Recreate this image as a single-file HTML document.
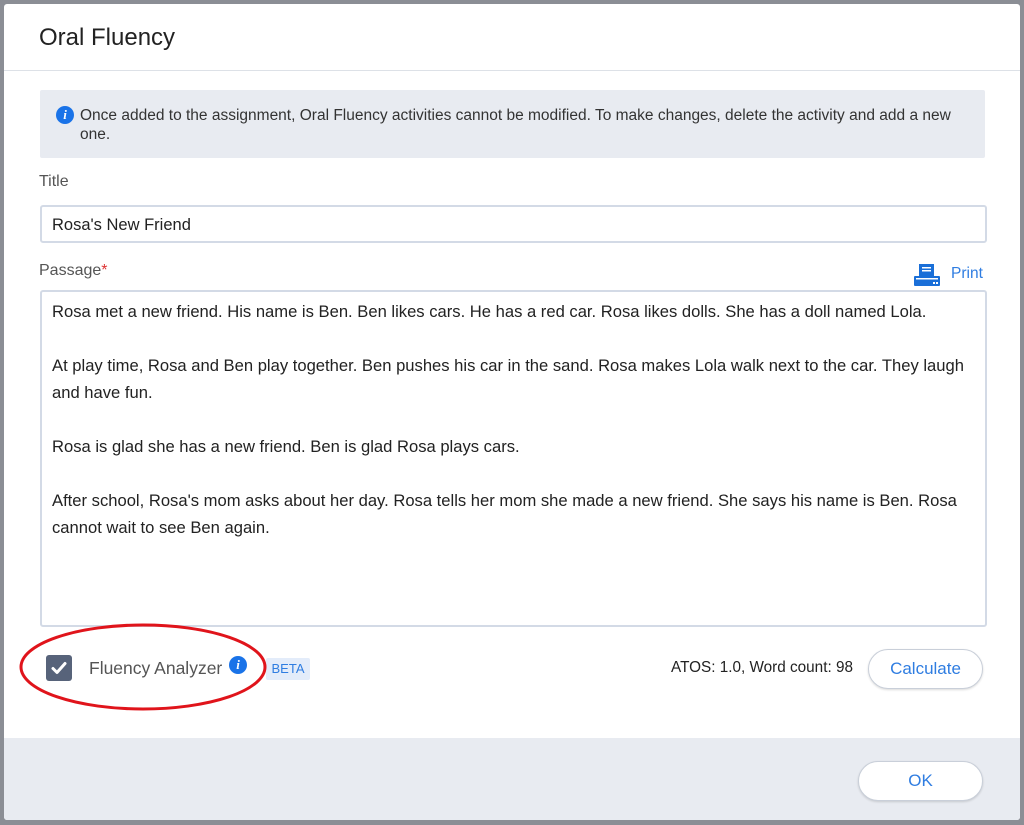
<!DOCTYPE html>
<html><head><style>
body{margin:0;width:1024px;height:825px;background:#8b8e95;position:relative;overflow:hidden;font-family:"Liberation Sans",sans-serif;}
.modal{position:absolute;left:4px;top:4px;width:1016px;height:816px;background:#fff;border-radius:3px;overflow:hidden;}
.hdr{position:absolute;left:0;top:0;width:100%;height:66px;border-bottom:1px solid #dde1e7;}
.hdr h1{position:absolute;left:35px;top:20px;margin:0;font-weight:normal;font-size:24px;color:#222;}
.info{position:absolute;left:36px;top:86px;width:945px;height:68px;background:#e8ebf1;border-radius:2px;font-size:15.5px;color:#333;line-height:19px;}
.info .t{position:absolute;left:40px;top:16px;width:900px;white-space:nowrap;}
.ic{position:absolute;width:18px;height:18px;border-radius:50%;background:#1a73e8;color:#fff;font:italic bold 13px "Liberation Serif",serif;text-align:center;line-height:18px;}
.lbl{position:absolute;left:35px;font-size:16px;color:#555;}
.inp{position:absolute;left:36px;width:943px;border:2px solid #d3dae6;border-radius:3px;background:#fff;}
.pass{font-size:16.6px;color:#222;line-height:27px;padding:6px 10px;}
.pass p{margin:0 0 27px 0;}
.cb{position:absolute;left:42px;top:651px;width:26px;height:26px;background:#57637a;border-radius:3px;}
.btn{position:absolute;border:1px solid #c9cfd9;border-radius:20px;background:#fff;color:#2f7de1;font-size:17px;text-align:center;box-shadow:0 1px 2px rgba(0,0,0,.15);}
.foot{position:absolute;left:0;top:734px;width:100%;height:82px;background:#e8ebf1;}
</style></head><body>
<div class="modal">
 <div class="hdr"><h1>Oral Fluency</h1></div>
 <div class="info"><div class="ic" style="left:16px;top:16px">i</div><div class="t">Once added to the assignment, Oral Fluency activities cannot be modified. To make changes, delete the activity and add a new<br>one.</div></div>
 <div class="lbl" style="top:169px">Title</div>
 <div class="inp" style="top:201px;height:34px;"><div style="padding:9px 10px;font-size:16.5px;color:#222">Rosa's New Friend</div></div>
 <div class="lbl" style="top:258px">Passage<span style="color:#d33">*</span></div>
 <svg style="position:absolute;left:910px;top:260px" width="26" height="22" viewBox="0 0 26 22"><rect x="5" y="0" width="15" height="12" fill="#1a6fd8"/><rect x="8" y="3" width="9" height="1.5" fill="#fff"/><rect x="8" y="6" width="9" height="1.5" fill="#fff"/><rect x="0" y="12" width="26" height="10" rx="1" fill="#1a6fd8"/><rect x="2" y="14" width="22" height="1.5" fill="#fff"/><rect x="19" y="18" width="2" height="2" fill="#fff"/><rect x="22" y="18" width="2" height="2" fill="#fff"/></svg>
 <div style="position:absolute;left:947px;top:261px;color:#2f7de1;font-size:15.5px">Print</div>
 <div class="inp" style="top:286px;height:333px;"><div class="pass">
 <p>Rosa met a new friend. His name is Ben. Ben likes cars. He has a red car. Rosa likes dolls. She has a doll named Lola.</p>
 <p>At play time, Rosa and Ben play together. Ben pushes his car in the sand. Rosa makes Lola walk next to the car. They laugh and have fun.</p>
 <p>Rosa is glad she has a new friend. Ben is glad Rosa plays cars.</p>
 <p>After school, Rosa's mom asks about her day. Rosa tells her mom she made a new friend. She says his name is Ben. Rosa cannot wait to see Ben again.</p>
 </div></div>
 <div class="cb"><svg width="26" height="26" viewBox="0 0 26 26"><path d="M7 13.5l4 4 8-9" stroke="#fff" stroke-width="3" fill="none" stroke-linecap="round" stroke-linejoin="round"/></svg></div>
 <div style="position:absolute;left:85px;top:654px;font-size:17.5px;color:#555">Fluency Analyzer</div>
 <div class="ic" style="left:225px;top:652px">i</div>
 <div style="position:absolute;left:262px;top:654px;width:44px;height:22px;background:#e3ecfa;border-radius:2px;color:#2f7de1;font-size:13px;text-align:center;line-height:22px">BETA</div>
 <div style="position:absolute;left:667px;top:655px;font-size:15.3px;color:#222">ATOS: 1.0, Word count: 98</div>
 <div class="btn" style="left:864px;top:645px;width:113px;height:38px;line-height:38px">Calculate</div>
 <div class="foot"><div class="btn" style="left:854px;top:23px;width:123px;height:38px;line-height:38px">OK</div></div>
</div>
<svg style="position:absolute;left:0;top:0" width="1024" height="825"><ellipse cx="143" cy="667" rx="122" ry="42" fill="none" stroke="#e0141b" stroke-width="3"/></svg>
</body></html>
